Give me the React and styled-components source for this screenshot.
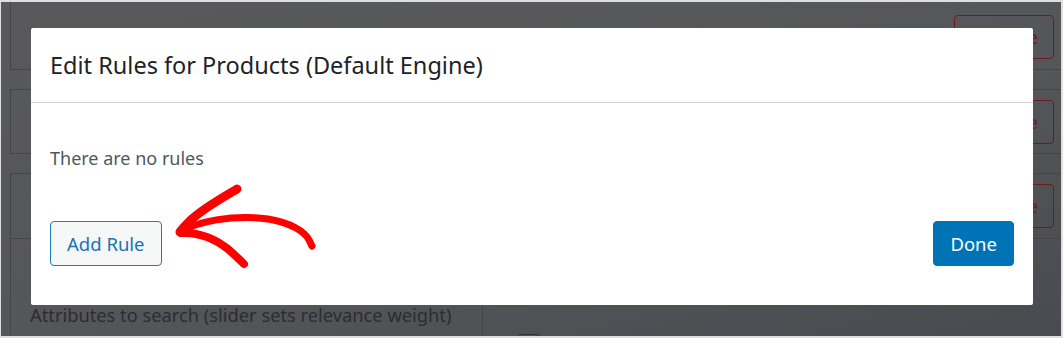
import styled, { createGlobalStyle } from 'styled-components'

const GlobalStyle = createGlobalStyle`
  html, body {
    margin: 0;
    padding: 0;
    background: #e4e4e4;
    font-family: "Noto Sans", "Open Sans", Arial, sans-serif;
  }
  * { box-sizing: border-box; }
`

const Frame = styled.div`
  position: relative;
  width: 1063px;
  height: 338px;
  border: 2px solid #dedede;
  border-left-width: 1px;
  border-right-width: 2px;
  overflow: hidden;
`

const Page = styled.div`
  height: calc(100% + 12px);
  padding: 0 0 0 9px;
  margin-top: -12px;
  display: flex;
  flex-direction: column;
  gap: 19px;
  background: linear-gradient(165deg, #59595b 0%, #555659 55%, #4a4b50 100%);
`

const SourceRow = styled.div`
  height: ${p => p.$height || 65}px;
  margin-right: -20px;
  border: 1px solid #444547;
  border-bottom-width: ${p => (p.$joined ? 0 : 1)}px;
  display: flex;
  align-items: center;
  justify-content: flex-end;
  padding: 0 26px 0 20px;
  flex-shrink: 0;
`

const RemoveButton = styled.button`
  width: 100px;
  height: 44px;
  border: 1px solid #6f1a1f;
  border-radius: 4px;
  background: transparent;
  color: #6f1a1f;
  font-family: inherit;
  font-size: 18px;
  margin-top: ${p => p.$offset || 0}px;
`

const AttributesCard = styled.div`
  margin-right: -20px;
  margin-top: -19px;
  border: 1px solid #444547;
  display: grid;
  grid-template-columns: 472px 1fr;
  flex: 1;
`

const AttrColumn = styled.div`
  padding: 63px 0 0 19px;
  border-right: 1px solid #444547;
  color: #2b2d31;
  font-size: 18.3px;
  white-space: nowrap;
`

const OptionColumn = styled.div`
  padding: 95px 0 0 34px;
  display: flex;
  align-items: flex-start;
  gap: 12px;
  color: #2b2d31;
  font-size: 18px;
  line-height: 24px;
  white-space: nowrap;
`

const Checkbox = styled.span`
  width: 24px;
  height: 24px;
  border: 1.5px solid #2f3034;
  border-radius: 5px;
  flex-shrink: 0;
`

const Modal = styled.div`
  position: absolute;
  left: 30px;
  top: 26px;
  width: 1002px;
  height: 277px;
  background: #ffffff;
  border-radius: 2px;
  display: flex;
  flex-direction: column;
`

const ModalHeader = styled.div`
  height: 75px;
  border-bottom: 1px solid #d4d5d7;
  display: flex;
  align-items: center;
  padding: 0 19px;
`

const Title = styled.h2`
  margin: 0;
  font-size: 23.5px;
  font-weight: 400;
  color: #1d2327;
`

const ModalBody = styled.div`
  flex: 1;
  padding: 41px 19px 0;
`

const EmptyText = styled.p`
  margin: 0;
  font-size: 18px;
  line-height: 28px;
  color: #50575e;
`

const Actions = styled.div`
  margin-top: 49px;
  display: flex;
  justify-content: space-between;
`

const Button = styled.button`
  height: 45px;
  padding: 0 16px;
  border-radius: 4px;
  font-family: inherit;
  font-size: 18.5px;
  cursor: pointer;
  border: 1px solid ${p => (p.$primary ? '#0073b7' : '#1a7cc1')};
  background: ${p => (p.$primary ? '#0073b7' : '#f6f7f7')};
  color: ${p => (p.$primary ? '#ffffff' : '#1a73b5')};
`

const Arrow = styled.svg`
  position: absolute;
  left: 164px;
  top: 176px;
  width: 160px;
  height: 95px;
  pointer-events: none;
`

export default function App() {
  return (
    <>
      <GlobalStyle />
      <Frame>
        <Page>
          <SourceRow $height={80}>
            <RemoveButton $offset={14}>Remove</RemoveButton>
          </SourceRow>
          <SourceRow>
            <RemoveButton>Remove</RemoveButton>
          </SourceRow>
          <SourceRow $joined>
            <RemoveButton>Remove</RemoveButton>
          </SourceRow>
          <AttributesCard>
            <AttrColumn>Attributes to search (slider sets relevance weight)</AttrColumn>
            <OptionColumn>
              <Checkbox />
              <span>Transfer Weight to entry ID</span>
            </OptionColumn>
          </AttributesCard>
        </Page>

        <Modal>
          <ModalHeader>
            <Title>Edit Rules for Products (Default Engine)</Title>
          </ModalHeader>
          <ModalBody>
            <EmptyText>There are no rules</EmptyText>
            <Actions>
              <Button>Add Rule</Button>
              <Button $primary>Done</Button>
            </Actions>
          </ModalBody>
        </Modal>

        <Arrow viewBox="165 178 160 95">
          <g fill="none" stroke="#ff0000" strokeLinecap="round" strokeLinejoin="round">
            <path d="M237 189 C 222 198, 204 208, 192 219 C 187 224, 183 228, 180 232" strokeWidth="9" />
            <path d="M180 232 C 196 222, 232 214, 268 219 C 292 223, 305 232, 309 240 C 311 243, 311 245, 312 246" strokeWidth="7" />
            <path d="M181 233 C 198 232, 214 238, 228 249 C 236 256, 241 261, 244 264" strokeWidth="8" />
          </g>
        </Arrow>
      </Frame>
    </>
  )
}
